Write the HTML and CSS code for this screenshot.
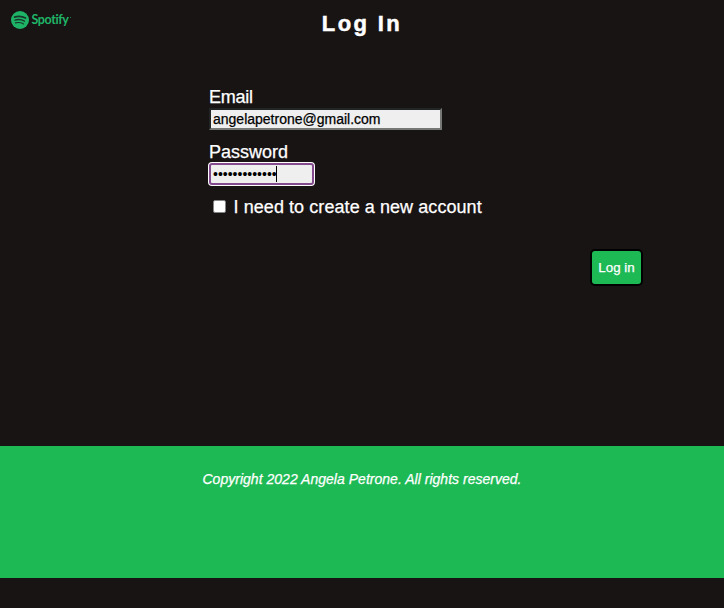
FILE: index.html
```html
<!DOCTYPE html>
<html lang="en">
<head>
<meta charset="utf-8">
<title>Log In</title>
<link rel="stylesheet" href="styles.css">
</head>
<body>
<header class="header">
  <div class="logo">
    <svg class="logo-mark" viewBox="0 0 18 18" aria-hidden="true">
      <circle cx="9" cy="9" r="9" fill="#1eb467"/>
      <g fill="none" stroke="#17382a" stroke-linecap="round">
        <path d="M3.500 6.100C7 5 11.300 5.300 14.500 7.100" stroke-width="1.700"/>
        <path d="M4 9.100C7.200 8.200 10.700 8.500 13.500 10.100" stroke-width="1.400"/>
        <path d="M4.400 11.900C7.200 11.200 10.200 11.500 12.600 12.900" stroke-width="1.100"/>
      </g>
    </svg>
    <span class="logo-name">Spotify</span><span class="logo-dot"></span>
  </div>
  <h1 class="title">Log In</h1>
</header>
<main class="main">
  <form class="form">
    <label class="label label-email" for="email">Email</label>
    <input class="field" id="email" type="text" value="angelapetrone@gmail.com">
    <span class="label">Password</span>
    <div class="password"><span class="dots">•••••••••••••</span><span class="caret"></span></div>
    <label class="check"><span class="box"></span><span class="check-text">I need to create a new account</span></label>
  </form>
  <button class="submit" type="button">Log in</button>
</main>
<footer class="footer">Copyright 2022 Angela Petrone. All rights reserved.</footer>
</body>
</html>
```
FILE: styles.css
```css
* { box-sizing: border-box; }
body {
  margin: 0;
  min-height: 608px;
  background: #191414;
  color: #fff;
  font-family: "Liberation Sans", Arial, sans-serif;
  -webkit-text-stroke: 0.25px;
}
.header {
  display: grid;
  grid-template-columns: 1fr auto 1fr;
  height: 86px;
  padding: 11px 11px 0;
}
.logo { display: flex; height: 18px; align-items: center; }
.logo-mark { width: 18px; height: 18px; margin-right: 2.5px; }
.logo-name {
  font: 700 12.5px/18px Lato, sans-serif;
  letter-spacing: -0.4px;
  color: #1eb467;
  -webkit-text-stroke: 0;
}
.logo-dot { width: 1px; height: 1px; margin: -5px 0 0 1px; background: #1a7d4b; }
.title {
  margin: 0;
  font-size: 22px;
  line-height: 26px;
  letter-spacing: 2.4px;
  -webkit-text-stroke: 0.5px;
}
.main { display: flex; flex-direction: column; height: 360px; padding: 0 81px 0 209px; }
.form { display: flex; flex-direction: column; align-items: flex-start; height: 163px; }
.label { font-size: 18px; line-height: 22px; }
.label-email { letter-spacing: -0.25px; }
.field {
  width: 233px;
  height: 22px;
  margin-bottom: 11px;
  padding: 0 2px;
  border: 2px solid;
  border-color: #222525 #767876 #767876 #222525;
  background: #efefef;
  color: #000;
  font: 14px/18px "Liberation Sans", Arial, sans-serif;
}
.password {
  display: flex;
  align-items: center;
  width: 105px;
  height: 22px;
  margin-bottom: 11px;
  padding-left: 2px;
  border: 2px solid #834b8d;
  border-radius: 3px;
  box-shadow: 0 0 0 1px #fff;
  background: #efefef;
  color: #000;
}
.dots { margin-right: -1px; font-size: 14px; line-height: 18px; -webkit-text-stroke: 0; }
.caret { width: 1px; height: 16px; background: #000; }
.check { display: flex; align-items: center; height: 22px; padding-left: 4px; }
.box { width: 13px; height: 13px; margin: -2px 7.5px 0 0; border: 1px solid #858585; border-radius: 2px; background: #fff; }
.check-text { font-size: 18px; line-height: 22px; letter-spacing: 0.07px; }
.submit {
  align-self: flex-end;
  width: 53px;
  height: 37px;
  padding: 0;
  border: 2px solid #000;
  border-radius: 5px;
  background: #1db954;
  color: #fff;
  font: 13.33px "Liberation Sans", Arial, sans-serif;
}
.footer {
  height: 132px;
  padding-top: 24px;
  background: #1db954;
  font-size: 14px;
  font-style: italic;
  line-height: 18px;
  letter-spacing: 0.02px;
  text-align: center;
}
```
